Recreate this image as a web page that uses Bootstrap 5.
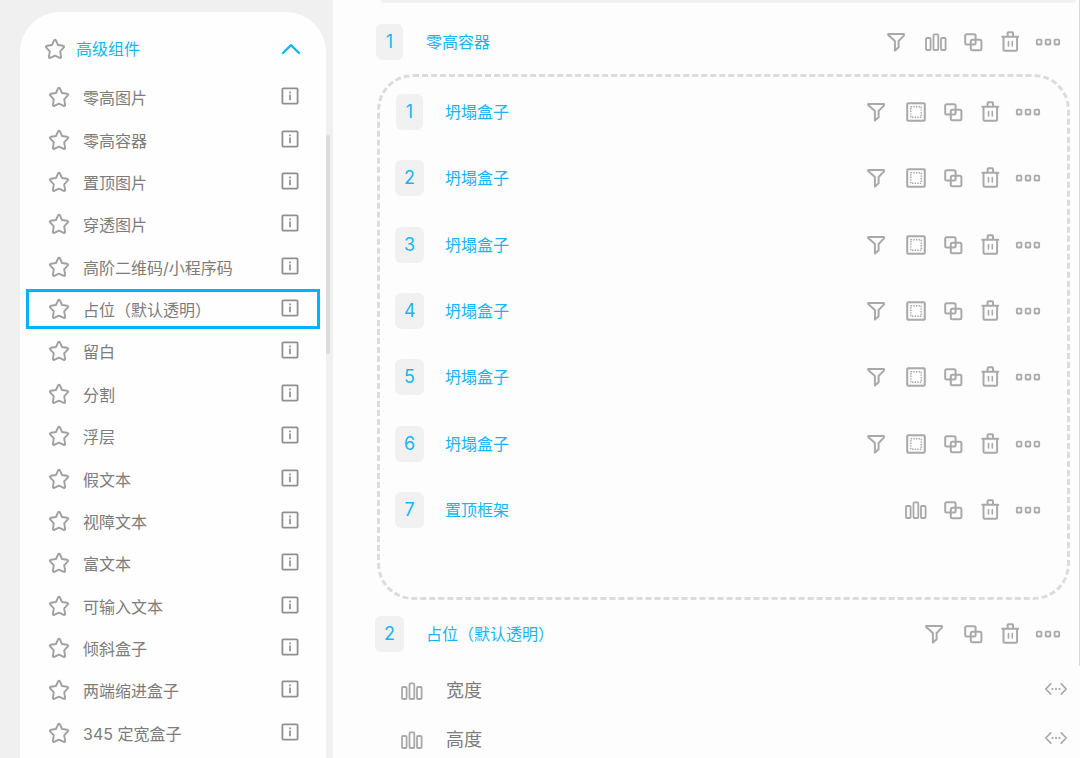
<!DOCTYPE html>
<html lang="zh-CN">
<head>
<meta charset="utf-8">
<meta name="viewport" content="width=device-width, initial-scale=1">
<title>高级组件</title>
<link href="https://cdn.jsdelivr.net/npm/bootstrap@5.3.0/dist/css/bootstrap.min.css" rel="stylesheet">
<style>
  :root { --accent: #18b4f4; --ink: #7c7c7c; --line: #a9a9a9; }
  body { font-family: Inter, "Noto Sans CJK SC", sans-serif; font-size: 16px; line-height: 24px; color: var(--ink); background: #fdfdfd; }
  a { color: inherit; text-decoration: none; }
  svg { display: block; fill: none; stroke: currentColor; stroke-linecap: round; stroke-linejoin: round; }
  .icon-btn { display: flex; align-items: center; justify-content: center; padding: 0; border: 0; background: none; color: var(--line); }
  .accent { color: var(--accent); }

  .side { width: 333px; padding: 12px 7px 0 20px; background: #f0f0f0; }
  .panel { background: #fefefe; border-radius: 40px 40px 0 0; padding: 0 6px 4px; }
  .panel-head { height: 64px; padding: 10px 19px 0 18px; }
  .panel-head a { margin-left: 10px; }
  .panel-head .icon-btn, .item .icon-btn { color: #a0a0a0; }
  .panel-head .chevron { color: var(--accent); }
  .slot { min-height: 40px; }
  .item { height: 40px; padding: 0 18px 0 19px; border: 3px solid transparent; }
  .item.active { border-color: #00b2ff; }
  .item a { margin-left: 13px; padding-top: 2px; }
  .item .info { color: #8f8f8f; padding-bottom: 2px; }
  .thumb { top: 135px; left: 326px; width: 4px; height: 219px; border-radius: 2px; background: #dcdcdc; }

  .topbar { height: 3px; margin: 0 4px 21px 6px; background: #f1f1f1; border-radius: 0 0 24px 24px; }
  .work { padding-left: 42px; }
  .entry { height: 36px; padding-right: 13px; }
  .num-col { width: 29px; }
  .num { min-width: 27px; height: 36px; line-height: 36px; padding: 0 9px; border-radius: 6px; background: #f1f1f1; font-size: 18px; text-align: center; color: var(--accent); }
  .entry a { margin-left: 22px; }
  .frame { margin: 14px 10px 0 2px; padding: 2px 20px 54px 15px; border: 3px dashed #dcdcdc; border-radius: 36px; }
  .frame .entry { padding-right: 0; }
  .frame .entry a { margin-left: 21px; }
  .act { width: 38px; height: 36px; }
  .act-copy { width: 36px; }
  .act-filter { width: 40px; }
  .props { margin-top: 21px; gap: 13px; padding: 0 12px 0 25px; font-size: 18px; }
  .prop { height: 36px; }
  .prop-icon { color: var(--line); }
  .prop-name { margin-left: 22px; }
  .prop .icon-btn { padding-bottom: 4px; }
  .page-thumb { top: 0; right: 0; width: 1px; height: 666px; background: #dadada; }
</style>
</head>
<body>
<svg width="0" height="0" class="position-absolute" aria-hidden="true">
  <symbol id="star" viewBox="0 0 22 22"><path stroke-width="1.9" d="M10.1 2.3Q11 1 11.9 2.3L14 7L19.2 7.8Q20.8 8.2 19.8 9.4L16.2 13.3L17.1 18.8Q17.2 20.4 15.8 19.8L11 17.6L6.2 19.8Q4.8 20.4 4.9 18.8L5.8 13.3L2.2 9.4Q1.2 8.2 2.8 7.8L8 7Z"/></symbol>
  <symbol id="info" viewBox="0 0 18 18"><rect x="1.4" y="1.4" width="15.2" height="15.2" rx="1" stroke-width="1.8"/><path stroke-width="1.7" stroke-linecap="butt" d="M9 7.6V13.2M9 4.6V6.2"/></symbol>
  <symbol id="up" viewBox="0 0 20 12"><path stroke-width="2.4" d="M2 10L10 2.2L18 10"/></symbol>
  <symbol id="filter" viewBox="0 0 24 24"><path stroke-width="2" d="M3.2 3.9H18.9V5.6L13.6 11V17.2L9.9 20.6V11L3.2 5Z"/></symbol>
  <symbol id="bars" viewBox="0 0 24 24"><g stroke-width="1.8"><rect x="2" y="8" width="4.6" height="12" rx="1"/><rect x="9.5" y="4.4" width="4.8" height="15.6" rx="1"/><rect x="17" y="8" width="4.6" height="12" rx="1"/></g></symbol>
  <symbol id="box" viewBox="0 0 24 24"><rect x="3.2" y="3.2" width="17.6" height="17.6" rx="1" stroke-width="2"/><rect x="6.8" y="6.8" width="10.4" height="10.4" stroke-width="1.4" stroke-dasharray="1.4 1.2" stroke-linecap="butt"/></symbol>
  <symbol id="copy" viewBox="0 0 24 24"><g stroke-width="2"><rect x="4.2" y="4.2" width="10.4" height="10.4" rx="1.5"/><rect x="9.8" y="9.8" width="10.6" height="10.4" rx="1.5"/></g></symbol>
  <symbol id="trash" viewBox="0 0 24 24"><path stroke-width="2" d="M4.3 6.8H20.3M9.6 6.4V3.2Q9.6 2.2 10.4 2.2H14.2Q15 2.2 15 3.2V6.4M5.5 7V19.6Q5.5 20.8 6.6 20.8H18Q19.1 20.8 19.1 19.6V7"/><path stroke-width="1.6" d="M10.5 11.6V16M14.3 11.6V16"/></symbol>
  <symbol id="dots" viewBox="0 0 26 24"><g stroke-width="1.8"><rect x="1.8" y="9.7" width="4.6" height="4.8" rx=".8"/><rect x="10.7" y="9.7" width="4.6" height="4.8" rx=".8"/><rect x="19.6" y="9.7" width="4.6" height="4.8" rx=".8"/></g></symbol>
  <symbol id="code" viewBox="0 0 24 14"><path stroke-width="1.7" d="M6.8 1.8L1.8 7L6.8 12.2M17.2 1.8L22.2 7L17.2 12.2"/><path stroke-width="2" stroke-linecap="butt" d="M7.6 7H9.4M11.1 7H12.9M14.6 7H16.4"/></symbol>
</svg>

<div class="d-flex vh-100 overflow-hidden position-relative">
  <aside class="side d-flex flex-column flex-shrink-0">
    <nav class="panel d-flex flex-column flex-fill" aria-label="高级组件">
      <div class="panel-head d-flex align-items-center flex-shrink-0">
        <button class="icon-btn" type="button" aria-label="收藏"><svg width="22" height="22"><use href="#star"/></svg></button>
        <a class="accent flex-fill" href="#">高级组件</a>
        <button class="icon-btn chevron" type="button" aria-label="收起"><svg width="20" height="12"><use href="#up"/></svg></button>
      </div>
      <ul class="list-unstyled d-flex flex-column flex-fill mb-0" id="components"></ul>
    </nav>
  </aside>

  <main class="work d-flex flex-column flex-fill">
    <div class="topbar"></div>
    <div class="entry d-flex align-items-center" data-num="1" data-name="零高容器" data-acts="filter bars copy trash dots"></div>
    <section class="frame d-flex flex-column flex-fill">
      <div class="d-flex align-items-center flex-fill"><div class="entry d-flex align-items-center w-100" data-num="1" data-name="坍塌盒子" data-acts="filter box copy trash dots"></div></div>
      <div class="d-flex align-items-center flex-fill"><div class="entry d-flex align-items-center w-100" data-num="2" data-name="坍塌盒子" data-acts="filter box copy trash dots"></div></div>
      <div class="d-flex align-items-center flex-fill"><div class="entry d-flex align-items-center w-100" data-num="3" data-name="坍塌盒子" data-acts="filter box copy trash dots"></div></div>
      <div class="d-flex align-items-center flex-fill"><div class="entry d-flex align-items-center w-100" data-num="4" data-name="坍塌盒子" data-acts="filter box copy trash dots"></div></div>
      <div class="d-flex align-items-center flex-fill"><div class="entry d-flex align-items-center w-100" data-num="5" data-name="坍塌盒子" data-acts="filter box copy trash dots"></div></div>
      <div class="d-flex align-items-center flex-fill"><div class="entry d-flex align-items-center w-100" data-num="6" data-name="坍塌盒子" data-acts="filter box copy trash dots"></div></div>
      <div class="d-flex align-items-center flex-fill"><div class="entry d-flex align-items-center w-100" data-num="7" data-name="置顶框架" data-acts="bars copy trash dots"></div></div>
    </section>
    <div class="entry d-flex align-items-center mt-3" data-num="2" data-name="占位（默认透明）" data-acts="filter copy trash dots"></div>
    <div class="props d-flex flex-column">
      <div class="prop d-flex align-items-center">
        <svg class="prop-icon" width="24" height="24"><use href="#bars"/></svg>
        <span class="prop-name flex-fill">宽度</span>
        <button class="icon-btn" type="button" aria-label="编辑宽度"><svg width="24" height="14"><use href="#code"/></svg></button>
      </div>
      <div class="prop d-flex align-items-center">
        <svg class="prop-icon" width="24" height="24"><use href="#bars"/></svg>
        <span class="prop-name flex-fill">高度</span>
        <button class="icon-btn" type="button" aria-label="编辑高度"><svg width="24" height="14"><use href="#code"/></svg></button>
      </div>
    </div>
  </main>
  <div class="thumb position-absolute"></div>
  <div class="page-thumb position-absolute"></div>
</div>

<script src="https://cdn.jsdelivr.net/npm/bootstrap@5.3.0/dist/js/bootstrap.bundle.min.js"></script>
<script>
  const names = ['零高图片', '零高容器', '置顶图片', '穿透图片', '高阶二维码/小程序码', '占位（默认透明）', '留白', '分割',
    '浮层', '假文本', '视障文本', '富文本', '可输入文本', '倾斜盒子', '两端缩进盒子', '345 定宽盒子'];
  document.getElementById('components').innerHTML = names.map((name, i) => `
    <li class="slot d-flex align-items-center flex-fill">
      <div class="item d-flex align-items-center w-100${i === 5 ? ' active' : ''}">
        <button class="icon-btn" type="button" aria-label="收藏"><svg width="22" height="22"><use href="#star"/></svg></button>
        <a class="flex-fill" href="#">${name}</a>
        <button class="icon-btn info" type="button" aria-label="说明"><svg width="18" height="18"><use href="#info"/></svg></button>
      </div>
    </li>`).join('');

  const labels = { filter: '筛选', bars: '布局', box: '盒子', copy: '复制', trash: '删除', dots: '更多' };
  document.querySelectorAll('.entry').forEach(row => {
    const acts = row.dataset.acts.split(' ').map(a =>
      `<button class="icon-btn act act-${a}" type="button" aria-label="${labels[a]}"><svg width="${a === 'dots' ? 26 : 24}" height="24"><use href="#${a}"/></svg></button>`).join('');
    row.innerHTML = `<div class="num-col d-flex justify-content-center flex-shrink-0"><span class="num">${row.dataset.num}</span></div>
      <a class="accent flex-fill" href="#">${row.dataset.name}</a>${acts}`;
  });
</script>
</body>
</html>
